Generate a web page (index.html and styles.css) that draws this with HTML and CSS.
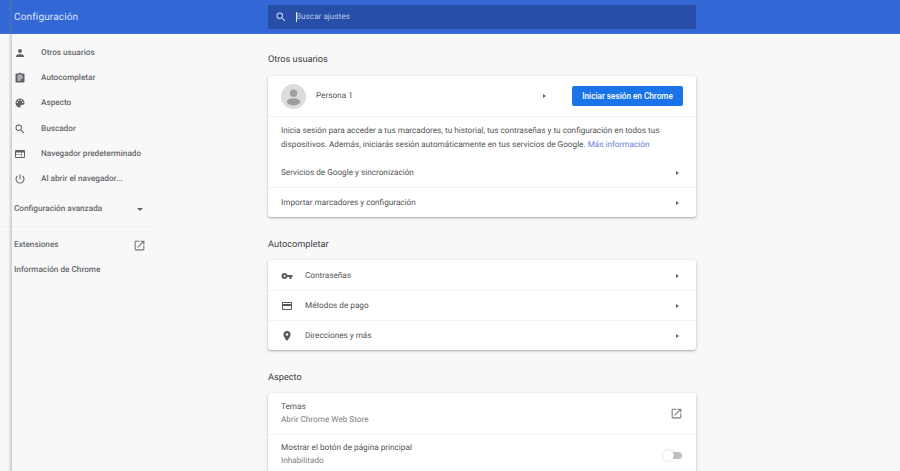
FILE: index.html
```html
<!DOCTYPE html>
<html lang="es">
<head>
<meta charset="utf-8">
<title>Configuración</title>
<link rel="stylesheet" href="styles.css">
</head>
<body>
<svg class="defs" width="0" height="0" aria-hidden="true">
  <symbol id="i-open" viewBox="0 0 24 24"><path d="M19 19H5V5h7V3H5a2 2 0 0 0-2 2v14a2 2 0 0 0 2 2h14a2 2 0 0 0 2-2v-7h-2v7zM14 3v2h3.59l-9.83 9.83 1.41 1.41L19 6.41V10h2V3h-7z"/></symbol>
  <symbol id="i-search" viewBox="0 0 24 24"><path d="M15.5 14h-.79l-.28-.27A6.47 6.47 0 0 0 16 9.5 6.5 6.5 0 1 0 9.5 16c1.61 0 3.09-.59 4.23-1.57l.27.28v.79l5 4.99L20.49 19l-4.99-5zm-6 0C7.01 14 5 11.99 5 9.5S7.01 5 9.5 5 14 7.01 14 9.5 11.99 14 9.5 14z"/></symbol>
</svg>
<div class="stripe"></div>
<header class="topbar">
  <h1 class="title">Configuración</h1>
  <div class="search">
    <svg class="search-icon"><use href="#i-search"/></svg>
    <span class="caret"></span><span class="placeholder">Buscar ajustes</span>
  </div>
</header>
<div class="page">
  <nav class="sidebar">
    <a class="nav-item"><svg class="nav-icon" viewBox="0 0 24 24"><path d="M12 12a4 4 0 1 0 0-8 4 4 0 0 0 0 8zm0 2c-2.67 0-8 1.34-8 4v2h16v-2c0-2.66-5.33-4-8-4z"/></svg>Otros usuarios</a>
    <a class="nav-item"><svg class="nav-icon" viewBox="0 0 24 24"><path d="M19 3h-4.18A3 3 0 0 0 12 1a3 3 0 0 0-2.82 2H5a2 2 0 0 0-2 2v14a2 2 0 0 0 2 2h14a2 2 0 0 0 2-2V5a2 2 0 0 0-2-2zm-7 0a1 1 0 1 1 0 2 1 1 0 0 1 0-2zm2 14H7v-2h7v2zm3-4H7v-2h10v2zm0-4H7V7h10v2z"/></svg>Autocompletar</a>
    <a class="nav-item"><svg class="nav-icon" viewBox="0 0 24 24"><path d="M12 3a9 9 0 0 0 0 18c.83 0 1.5-.67 1.5-1.5 0-.39-.15-.74-.39-1.01a1.5 1.5 0 0 1 1.12-2.49H16a5 5 0 0 0 5-5c0-4.42-4.03-8-9-8zm-5.5 9a1.5 1.5 0 1 1 0-3 1.5 1.5 0 0 1 0 3zm3-4a1.5 1.5 0 1 1 0-3 1.5 1.5 0 0 1 0 3zm5 0a1.5 1.5 0 1 1 0-3 1.5 1.5 0 0 1 0 3zm3 4a1.5 1.5 0 1 1 0-3 1.5 1.5 0 0 1 0 3z"/></svg>Aspecto</a>
    <a class="nav-item"><svg class="nav-icon"><use href="#i-search"/></svg>Buscador</a>
    <a class="nav-item"><svg class="nav-icon" viewBox="0 0 24 24"><path d="M20 4H4a2 2 0 0 0-2 2v12a2 2 0 0 0 2 2h16a2 2 0 0 0 2-2V6a2 2 0 0 0-2-2zm-5 14H4v-4h11v4zm0-5H4V9h11v4zm5 5h-4V9h4v9z"/></svg>Navegador predeterminado</a>
    <a class="nav-item"><svg class="nav-icon" viewBox="0 0 24 24"><path d="M13 3h-2v10h2V3zm4.83 2.17-1.42 1.42A6.92 6.92 0 0 1 19 12a7 7 0 1 1-11.42-5.42L6.17 5.17A8.96 8.96 0 0 0 3 12a9 9 0 0 0 18 0c0-2.74-1.23-5.18-3.17-6.83z"/></svg>Al abrir el navegador...</a>
    <div class="nav-plain nav-advanced"><span>Configuración avanzada</span><span class="arrow-down"></span></div>
    <div class="nav-divider"></div>
    <div class="nav-plain"><span>Extensiones</span><svg class="nav-open"><use href="#i-open"/></svg></div>
    <div class="nav-plain"><span>Información de Chrome</span></div>
  </nav>
  <main class="content">
    <h2 class="section-title first">Otros usuarios</h2>
    <section class="card">
      <div class="row row-user">
        <svg class="avatar" viewBox="0 0 26 26"><circle cx="13" cy="13" r="13" fill="#dcdcdc"/><circle cx="13" cy="9.5" r="3.8" fill="#9e9e9e"/><ellipse cx="13" cy="18.5" rx="7" ry="3.8" fill="#9e9e9e"/></svg>
        <span class="user-name">Persona 1</span>
        <span class="arrow-right user-arrow"></span>
        <button class="signin">Iniciar sesión en Chrome</button>
      </div>
      <p class="intro">Inicia sesión para acceder a tus marcadores, tu historial, tus contraseñas y tu configuración en todos tus dispositivos. Además, iniciarás sesión automáticamente en tus servicios de Google. <a class="link">Más información</a></p>
      <div class="row row-link"><span>Servicios de Google y sincronización</span><span class="arrow-right"></span></div>
      <div class="row row-link"><span>Importar marcadores y configuración</span><span class="arrow-right"></span></div>
    </section>
    <h2 class="section-title">Autocompletar</h2>
    <section class="card">
      <div class="row row-link"><svg class="row-icon" viewBox="0 0 24 24"><path d="M12.65 10A6 6 0 0 0 7 6a6 6 0 0 0 0 12 6 6 0 0 0 5.65-4H17v4h4v-4h2v-4H12.65zM7 14a2 2 0 1 1 0-4 2 2 0 0 1 0 4z"/></svg><span class="grow">Contraseñas</span><span class="arrow-right"></span></div>
      <div class="row row-link"><svg class="row-icon" viewBox="0 0 24 24"><path d="M20 4H4a2 2 0 0 0-2 2v12a2 2 0 0 0 2 2h16a2 2 0 0 0 2-2V6a2 2 0 0 0-2-2zm0 14H4v-6h16v6zm0-10H4V6h16v2z"/></svg><span class="grow">Métodos de pago</span><span class="arrow-right"></span></div>
      <div class="row row-link"><svg class="row-icon" viewBox="0 0 24 24"><path d="M12 2a7 7 0 0 0-7 7c0 5.25 7 13 7 13s7-7.75 7-13a7 7 0 0 0-7-7zm0 9.5a2.5 2.5 0 1 1 0-5 2.5 2.5 0 0 1 0 5z"/></svg><span class="grow">Direcciones y más</span><span class="arrow-right"></span></div>
    </section>
    <h2 class="section-title">Aspecto</h2>
    <section class="card">
      <div class="row row-double">
        <div class="double-text"><div>Temas</div><div class="secondary">Abrir Chrome Web Store</div></div>
        <svg class="row-open"><use href="#i-open"/></svg>
      </div>
      <div class="row row-double">
        <div class="double-text"><div>Mostrar el botón de página principal</div><div class="secondary">Inhabilitado</div></div>
        <span class="toggle"><span class="toggle-knob"></span></span>
      </div>
    </section>
  </main>
</div>
</body>
</html>
```
FILE: styles.css
```css
* { box-sizing: border-box; }
html, body { margin: 0; height: 100%; overflow: hidden; }
body {
  background: #f8f8f8;
  color: #4f5255;
  font-family: Roboto, "Liberation Sans", sans-serif;
  font-size: 8.2px;
  letter-spacing: 0;
  text-rendering: geometricPrecision;
}
.defs { position: absolute; }
.stripe {
  position: absolute; left: 9px; top: 0; bottom: 0; width: 3px; z-index: 2;
  background: linear-gradient(to right, rgba(120,120,120,.12), rgba(120,120,120,.32));
}
.topbar {
  height: 34px; background: #3367d6; display: flex; align-items: center;
  padding: 0 204px 0 14px; border-bottom: 1px solid #3d6fdc;
}
.title { margin: 0; padding-top: 2px; width: 254px; font-size: 10px; font-weight: 400; color: #dce8fb; letter-spacing: .15px; }
.search {
  width: 428px; height: 24px; background: #274fa8; display: flex; align-items: center;
  padding-left: 7px; color: #b6c8ee; font-size: 8.2px;
}
.search-icon { width: 12px; height: 12px; fill: #c9d8f6; margin-right: 9px; }
.caret { width: 1px; height: 10px; background: #dfe8fa; }
.placeholder { margin-left: -1px; padding-top: 1px; }
.page { display: flex; align-items: flex-start; }
.sidebar { width: 268px; padding: 6px 0 0 0; flex: none; color: #66696d; }
.nav-item { height: 25.2px; display: flex; align-items: center; padding: 1px 0 0 14px; font-weight: 500; }
.nav-icon { width: 12px; height: 12px; fill: #5f6368; margin-right: 15px; flex: none; }
.nav-plain {
  width: 152px; height: 25px; display: flex; align-items: center; justify-content: space-between;
  padding: 1px 6px 0 14px; font-weight: 500;
}
.nav-advanced { margin-top: 5px; }
.nav-divider { width: 152px; height: 1px; background: #f1f1f1; margin: 5px 0 5px; }
.arrow-down { width: 0; height: 0; border: 3px solid transparent; border-top-color: #5f6368; border-bottom: 0; margin-right: 3px; }
.nav-open { width: 13px; height: 13px; fill: #707478; }
.content { width: 428px; flex: none; }
.section-title { margin: 20px 0 9px; height: 14px; line-height: 16px; font-size: 9.2px; font-weight: 400; color: #3c4043; }
.section-title.first { margin: 18px 0 10px; }
.card { background: #fff; border-radius: 3px; box-shadow: 0 1px 2px rgba(60,64,67,.35), 0 1px 4px rgba(60,64,67,.12); }
.row { display: flex; align-items: center; padding: 0 13px; border-top: 1px solid #f3f3f3; }
.row:first-child { border-top: 0; }
.row-user { height: 40px; }
.avatar { width: 25px; height: 25px; flex: none; }
.user-name { margin-left: 10px; flex: 1; }
.arrow-right { width: 0; height: 0; border: 2.5px solid transparent; border-left: 3px solid #5f6368; border-right: 0; flex: none; margin-right: 4px; }
.row .user-arrow { margin-right: 26px; }
.signin {
  width: 111px; height: 20px; border: 0; border-radius: 2px; background: #1a73e8; color: #fff;
  font: 500 8.2px Roboto, "Liberation Sans", sans-serif; letter-spacing: 0; padding: 0;
}
.intro { margin: 0; padding: 8px 13px 5px; line-height: 13.5px; border-top: 1px solid #f3f3f3; }
.link { color: #5f7fd0; }
.row-link { height: 30px; padding-top: 1px; justify-content: space-between; }
.intro + .row-link { border-top: 0; }
.row-icon { width: 12px; height: 12px; fill: #55595d; flex: none; margin-right: 12px; }
.grow { flex: 1; }
.row-double { height: 40.5px; padding-top: 2px; justify-content: space-between; }
.double-text { line-height: 13px; }
.secondary { color: #7a7e83; }
.row-open { width: 13px; height: 13px; margin-top: -2px; fill: #777b80; }
.toggle { position: relative; width: 15px; height: 7px; background: #bdc1c6; border-radius: 4px; margin-right: 1px; }
.toggle-knob { position: absolute; left: -4px; top: -2px; width: 11px; height: 11px; border-radius: 50%; background: #fff; box-shadow: 0 0 2px rgba(0,0,0,.25); }
```
